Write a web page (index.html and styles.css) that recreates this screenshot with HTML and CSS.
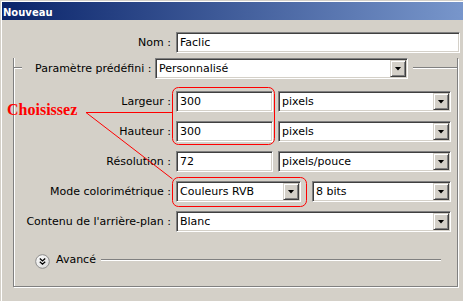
FILE: index.html
```html
<!DOCTYPE html>
<html lang="fr">
<head>
    <meta charset="UTF-8">
    <title>Nouveau</title>
    <link rel="stylesheet" href="styles.css">
</head>
<body>
    <div class="window">
        <div class="titlebar">Nouveau</div>

        <div class="row name-row">
            <div class="label wide">Nom :</div>
            <div class="field name">Faclic</div>
        </div>

        <div class="group">
            <div class="group-head">
                <span class="rule short"></span>
                <span class="head-label">Paramètre prédéfini :</span>
                <div class="select preset"><span class="value">Personnalisé</span><span class="arrow"></span></div>
                <span class="rule long"></span>
            </div>

            <div class="rows">
                <div class="row">
                    <div class="label">Largeur :</div>
                    <div class="field size">300</div>
                    <div class="select unit"><span class="value">pixels</span><span class="arrow"></span></div>
                </div>
                <div class="row">
                    <div class="label">Hauteur :</div>
                    <div class="field size">300</div>
                    <div class="select unit"><span class="value">pixels</span><span class="arrow"></span></div>
                </div>
                <div class="row">
                    <div class="label">Résolution :</div>
                    <div class="field size">72</div>
                    <div class="select unit"><span class="value">pixels/pouce</span><span class="arrow"></span></div>
                </div>
                <div class="row">
                    <div class="label">Mode colorimétrique :</div>
                    <div class="select mode"><span class="value">Couleurs RVB</span><span class="arrow"></span></div>
                    <div class="select bits"><span class="value">8 bits</span><span class="arrow"></span></div>
                </div>
                <div class="row">
                    <div class="label">Contenu de l'arrière-plan :</div>
                    <div class="select content"><span class="value">Blanc</span><span class="arrow"></span></div>
                </div>
            </div>

            <div class="advanced">
                <svg class="toggle" width="15" height="15" viewBox="0 0 15 15">
                    <defs>
                        <linearGradient id="knob" x1="0" y1="0" x2="1" y2="1">
                            <stop offset="0" stop-color="#ffffff"/>
                            <stop offset="1" stop-color="#d8d8d8"/>
                        </linearGradient>
                    </defs>
                    <circle cx="7.5" cy="7.5" r="6.8" fill="url(#knob)" stroke="#8c8c8c" stroke-width="1"/>
                    <path d="M4.8 4.6l2.7 2.4l2.7-2.4M4.8 7.8l2.7 2.4l2.7-2.4" fill="none" stroke="#000" stroke-width="1.3"/>
                </svg>
                <span class="adv-label">Avancé</span>
                <span class="rule adv-rule"></span>
            </div>
        </div>

        <!-- annotations rouges -->
        <svg class="notes" width="463" height="301" viewBox="0 0 463 301">
            <text x="7" y="115" class="note-text">Choisissez</text>
            <path d="M86 112.5H172.5M86 112.5L172.5 179" fill="none" stroke="#f00" stroke-width="1"/>
            <rect x="172.5" y="87.5" width="102" height="57" rx="6" fill="none" stroke="#f00" stroke-width="1"/>
            <rect x="172.5" y="177.5" width="134" height="29" rx="6" fill="none" stroke="#f00" stroke-width="1"/>
        </svg>
    </div>
</body>
</html>
```

FILE: styles.css
```css
*{
    margin: 0;
    padding: 0;
}
body{
    background: #d4d0c8;
    font: 11px "DejaVu Sans", Tahoma, sans-serif;
    color: #000;
}
.window{
    position: relative;
    width: 463px;
    height: 301px;
    overflow: hidden;
    box-shadow: inset 1px 1px 0 #d4d0c8, inset 2px 2px 0 #fff;
}
.titlebar{
    height: 18px;
    box-sizing: border-box;
    margin: 2px 0 0 2px;
    padding: 3px 0 0 1px;
    line-height: 15px;
    font-size: 10px;
    font-weight: bold;
    color: #fff;
    background: linear-gradient(to right, #0a246a, #7896cb);
}

.row{
    display: flex;
    gap: 5px;
    white-space: nowrap;
}
.name-row{
    margin-top: 12px;
}
.label{
    flex: none;
    width: 157px;
    text-align: right;
    line-height: 21px;
}
.label.wide{
    width: 171px;
}

.field,
.select{
    flex: none;
    height: 21px;
    box-sizing: border-box;
    border: 1px solid;
    border-color: #808080 #fff #fff #808080;
    box-shadow: inset 1px 1px 0 #404040, inset -1px -1px 0 #d4d0c8;
    background: #fff;
    line-height: 19px;
    white-space: nowrap;
}
.field{
    padding: 0 3px;
}
.select{
    display: flex;
}
.select .value{
    flex: 1;
    padding-left: 3px;
}
.select .arrow{
    flex: none;
    width: 16px;
    height: 17px;
    margin: 1px 1px 0 0;
    box-sizing: border-box;
    border: 1px solid;
    border-color: #d4d0c8 #404040 #404040 #d4d0c8;
    box-shadow: inset 1px 1px 0 #fff, inset -1px -1px 0 #808080;
    background: #d4d0c8;
    display: flex;
    align-items: center;
    justify-content: center;
}
.select .arrow::before{
    content: "";
    width: 7px;
    height: 4px;
    background: #000;
    clip-path: polygon(0 0, 100% 0, 50% 100%);
}

.name{ width: 284px; }
.size{ width: 97px; }
.unit{ width: 173px; }
.mode{ width: 125px; }
.bits{ width: 139px; margin-left: 6px; }
.content{ width: 275px; }
.preset{ width: 253px; margin-left: 4px; }

/* cadre grave */
.group{
    width: 445px;
    box-sizing: border-box;
    margin: 14px 0 0 13px;
    padding-bottom: 17px;
    border: 1px solid #808080;
    border-top: 0;
    box-shadow: inset 1px 0 0 #fff, 1px 1px 0 #fff;
}
.group-head{
    display: flex;
    height: 21px;
    margin-top: -9px;
    white-space: nowrap;
}
.rule{
    align-self: flex-start;
    height: 0;
    border-top: 1px solid #808080;
    border-bottom: 1px solid #fff;
}
.group-head .rule{
    margin-top: 9px;
}
.rule.short{
    width: 8px;
}
.rule.long{
    flex: 1;
    margin-left: 5px;
}
.head-label{
    width: 116px;
    margin-left: 13px;
    text-align: right;
    line-height: 21px;
}

.rows{
    margin-top: 12px;
    display: flex;
    flex-direction: column;
    gap: 9px;
}

.advanced{
    display: flex;
    height: 15px;
    margin: 22px 16px 0 21px;
}
.toggle{
    flex: none;
    display: block;
}
.adv-label{
    margin-left: 6px;
    line-height: 12px;
}
.adv-rule{
    flex: 1;
    margin: 5px 0 0 5px;
}

.notes{
    position: absolute;
    left: 0;
    top: 0;
    pointer-events: none;
}
.note-text{
    font-family: "Liberation Serif", "Times New Roman", serif;
    font-size: 16px;
    font-weight: bold;
    fill: #f00;
}
```
